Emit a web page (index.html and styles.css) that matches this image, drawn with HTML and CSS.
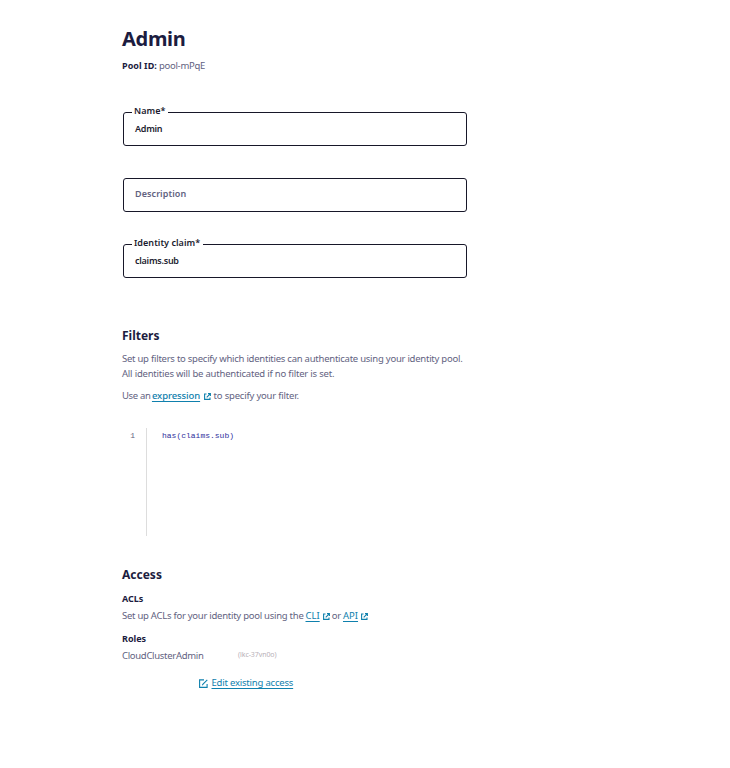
FILE: index.html
```html
<!DOCTYPE html>
<html lang="en">
<head>
<meta charset="utf-8">
<title>Admin</title>
<link rel="stylesheet" href="styles.css">
</head>
<body>
<svg class="sprite" aria-hidden="true">
  <symbol id="external" viewBox="0 0 7 7"><path d="M2.5 1H.6v5.4H6V4.5M4 .6h2.4V3M6.2.8L2.7 4.3" fill="none" stroke="currentColor" stroke-width="1.1"/></symbol>
  <symbol id="edit" viewBox="0 0 9 9"><path d="M5 .9H.6v7.5h7.5V5M8.3.8L4 5.1l-.7 1.1" fill="none" stroke="currentColor" stroke-width="1.1"/></symbol>
</svg>
<main class="page">
  <h1>Admin</h1>
  <p class="pool"><strong>Pool ID:</strong><span>pool-mPqE</span></p>
  <div class="fields">
    <div class="field"><span class="legend">Name*</span><span class="value">Admin</span></div>
    <div class="field"><span class="placeholder">Description</span></div>
    <div class="field"><span class="legend">Identity claim*</span><span class="value">claims.sub</span></div>
  </div>
  <section class="filters">
    <h2>Filters</h2>
    <p class="intro">Set up filters to specify which identities can authenticate using your identity pool.<br><span class="second">All identities will be authenticated if no filter is set.</span></p>
    <p class="hint"><span class="before">Use an</span><a class="strong-link">expression</a><svg class="icon"><use href="#external"/></svg><span class="after">to specify your filter.</span></p>
    <div class="editor"><div class="gutter">1</div><code>has(claims.sub)</code></div>
  </section>
  <section class="access">
    <h2>Access</h2>
    <h3>ACLs</h3>
    <p class="acl"><span>Set up ACLs for your identity pool using the</span><a>CLI</a><svg class="icon"><use href="#external"/></svg><span class="or">or</span><a>API</a><svg class="icon"><use href="#external"/></svg></p>
    <h3>Roles</h3>
    <div class="role"><span class="name">CloudClusterAdmin</span><span class="resource">(lkc-37vn0o)</span></div>
    <div class="edit"><svg class="edit-icon"><use href="#edit"/></svg><a>Edit existing access</a></div>
  </section>
</main>
</body>
</html>
```
FILE: styles.css
```css
* { box-sizing: border-box; }
body { margin: 0; background: #fff; color: #62627f; font: 9.5px/15px "Noto Sans", sans-serif; letter-spacing: -0.2px; }
.sprite { display: none; }
.page { padding: 24px 0 0 122px; width: 500px; }
h1, h2, h3, p { margin: 0; }
h1, h2, h3, strong { color: #1c1c40; font-weight: 700; letter-spacing: 0; }
h1 { font-size: 20px; line-height: 30px; letter-spacing: -0.3px; }
h2 { font-size: 12px; line-height: 18px; }
h3 { font-size: 9px; line-height: 15px; }
.pool { display: flex; gap: 2px; margin-top: 4px; letter-spacing: -0.27px; }
.pool strong { font-size: 9px; letter-spacing: 0.05px; }
.fields { display: grid; gap: 32px; margin: 39px 0 0 1px; width: 344px; }
.field { position: relative; height: 34px; padding: 0 11px; border: 1px solid #171729; border-radius: 3px; font-size: 9px; line-height: 31px; font-weight: 600; color: #1c1c30; letter-spacing: 0.04px; }
.legend { position: absolute; left: 8px; top: -10px; padding: 0 3px 0 2px; line-height: 15px; background: #fff; }
.value { letter-spacing: -0.25px; }
.placeholder { display: block; line-height: 29px; color: #62627f; letter-spacing: 0.08px; }
.filters { margin-top: 49px; }
.intro { margin-top: 6px; letter-spacing: -0.245px; }
.second { letter-spacing: -0.2px; }
.hint { display: flex; align-items: center; margin-top: 7px; }
a { color: #0f80ad; text-decoration: underline; text-underline-offset: 2px; }
.before { letter-spacing: -0.35px; }
.strong-link { margin: 0 4px 0 1.5px; font-weight: 500; letter-spacing: -0.1px; }
.icon { width: 7px; height: 7px; margin-top: 2px; color: #0f80ad; }
.after { margin-left: 2.5px; }
.editor { display: flex; height: 108px; margin-top: 25px; font: 8px/15px "Liberation Mono", monospace; letter-spacing: 0; }
.gutter { width: 25px; padding-right: 11px; border-right: 1px solid #ddd; text-align: right; }
.editor code { padding-left: 15px; font: inherit; color: #2f2f9d; }
.access { margin-top: 30px; }
.access h3 { margin-top: 7px; }
.acl { display: flex; align-items: center; margin-top: 2px; }
.access .acl + h3 { margin-top: 8px; }
.acl span:first-child { letter-spacing: -0.26px; }
.acl a { margin: 0 3px 0 2px; letter-spacing: 0; }
.acl .or { margin-left: 2px; }
.role { display: flex; margin-top: 2px; }
.name { width: 116px; letter-spacing: -0.3px; }
.resource { font-size: 7px; line-height: 13px; color: #b8b0b8; letter-spacing: -0.08px; }
.edit { display: flex; align-items: center; gap: 3.5px; margin: 12px 0 0 77px; }
.edit-icon { width: 9px; height: 9px; margin-top: 1px; color: #0f80ad; }
```
